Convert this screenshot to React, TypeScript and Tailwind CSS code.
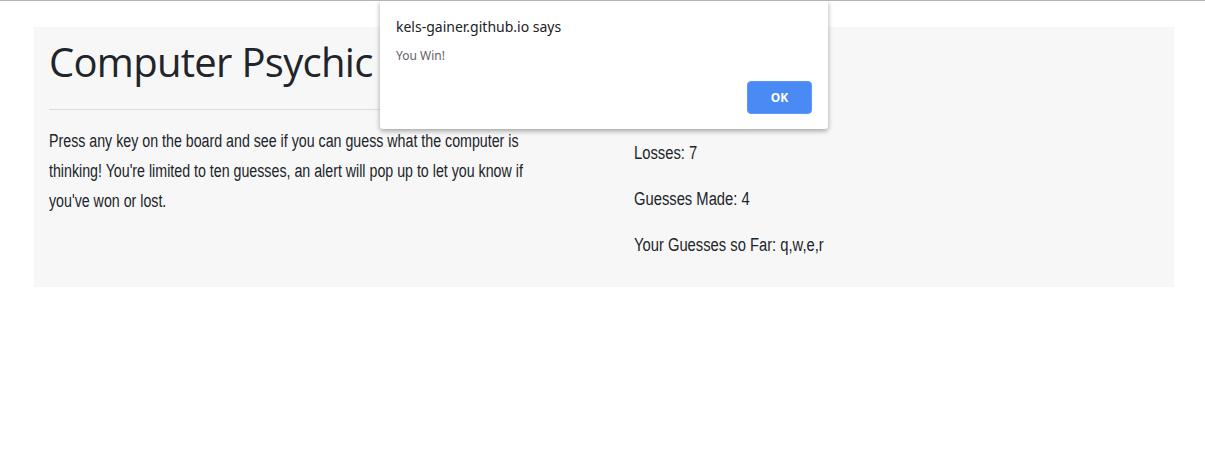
function Stat({ children }: { children: React.ReactNode }) {
  return (
    <div className="w-[555px] h-[30px]">
      <p className="w-[600px] origin-left scale-x-[0.82] text-[18px] leading-[30px] whitespace-nowrap">{children}</p>
    </div>
  );
}

export default function App() {
  return (
    <div className="relative w-[1205px] h-[472px] bg-white overflow-hidden border-t border-[#b3b3b3] font-['Liberation_Sans',sans-serif]">
      <div className="mt-[26px] mx-[34px] w-[1140px] h-[260px] bg-[#f7f7f7] px-[15px] pt-[11px] text-[#212529] flex">
        <div className="w-[585px] pr-[30px]">
          <h1 className="text-[40px] leading-[48px] tracking-[-0.7px] font-['Open_Sans',sans-serif]">Computer Psychic</h1>
          <hr className="mt-[23px] border-t border-[#dcdcdc]" />
          <div className="w-[555px] pt-[16px]">
            <p className="w-[650px] origin-left scale-x-[0.79] text-[18px] leading-[30px]">
              Press any key on the board and see if you can guess what the computer is thinking! You're limited to ten guesses, an alert will pop up to let you know if you've won or lost.
            </p>
          </div>
        </div>
        <div className="flex flex-col gap-[16px] pt-[8px]">
          <Stat>Guesses Left: 6</Stat>
          <Stat>Wins: 1</Stat>
          <Stat>Losses: 7</Stat>
          <Stat>Guesses Made: 4</Stat>
          <Stat>Your Guesses so Far: q,w,e,r</Stat>
        </div>
      </div>

      <div className="absolute left-[380px] top-0 w-[448px] h-[128px] bg-white rounded-b-[3px] shadow-[0_2px_5px_rgba(0,0,0,0.35)] font-['Noto_Sans',sans-serif]">
        <div className="pl-[16px] pt-[16px] text-[14px] leading-[20px] text-[#202124]">kels-gainer.github.io says</div>
        <div className="pl-[16px] pt-[11px] text-[12px] leading-[16px] text-[#5f6368]">You Win!</div>
        <div className="flex justify-end pr-[16px] pt-[17px]">
          <button className="w-[65px] h-[33px] rounded-[4px] bg-[#4a8af4] border border-[#5e97f5] text-white text-[12px] font-bold">OK</button>
        </div>
      </div>
    </div>
  );
}
